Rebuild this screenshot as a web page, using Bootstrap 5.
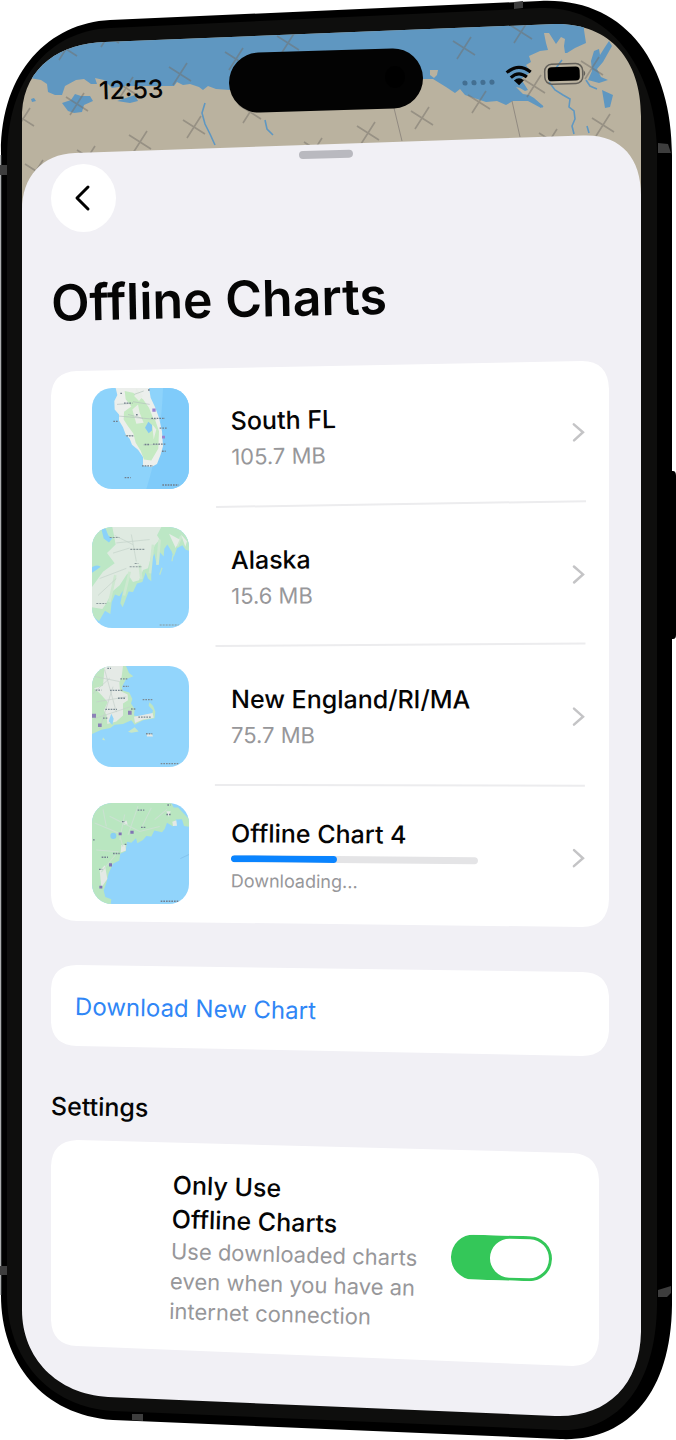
<!DOCTYPE html>
<html lang="en">
<head>
<meta charset="utf-8">
<meta name="viewport" content="width=device-width, initial-scale=1">
<title>Offline Charts</title>
<link href="https://cdn.jsdelivr.net/npm/bootstrap@5.3.0/dist/css/bootstrap.min.css" rel="stylesheet">
<style>
  body { font-family: Inter, "Liberation Sans", sans-serif; background: #fff; color: #050505; }
  .phone { padding: 75px 67px 74px 51px; isolation: isolate; }
  .backdrop { position: absolute; inset: 0; width: 100%; height: 100%; z-index: -1; }
  .tilted { transform: rotate(var(--tilt)); transform-origin: left center; }
  .status { --tilt: -1.8deg; padding-left: 48px; padding-right: 22px; height: 30px; }
  .clock { font-size: 25px; line-height: 30px; font-weight: 500; margin-top: 4px; }
  .grabber { --tilt: -1.5deg; width: 54px; height: 8px; background: #b9b9bf; margin-top: 46px; margin-left: 248px; }
  .back { width: 65px; height: 68px; margin-top: 5px; background: #fff; }
  .page-title { --tilt: -1.2deg; font-size: 50px; line-height: 60px; font-weight: 600; margin-top: 41px; margin-bottom: 28px; }
  .panel { isolation: isolate; }
  .charts { padding: 8px 24px 7px 41px; margin-bottom: 38px; }
  .chart-row { height: 139px; gap: 26px; color: inherit; }
  .chart-row:last-child { height: 134px; }
  .thumb { width: 97px; height: 101px; border-radius: 20px; flex: none; }
  .chart-body { align-self: stretch; border-bottom: 2px solid #ececee; padding-left: 16px; min-width: 0; }
  .chart-row:last-child .chart-body { border: 0; padding-top: 4px; }
  .item-name { font-size: 25px; line-height: 34px; font-weight: 500; }
  .item-note { font-size: 22px; line-height: 30px; color: #97979a; }
  .item-note.minor { font-size: 18px; line-height: 26px; }
  .chart-body .item-note:not(.minor) { margin-top: 4px; }
  .download-bar { width: 247px; height: 7px; background: #e4e4e6; margin: 5px 0 6px; }
  .download-bar .progress-bar { background: #0a84ff; border-radius: 4px; }
  .download-new { --tilt: 1deg; height: 91px; padding: 0 24px 8px; font-size: 24px; color: #2f86f6; margin-bottom: 35px; }
  .section-title { --tilt: 1deg; font-size: 25px; line-height: 30px; font-weight: 500; margin-bottom: 19px; }
  .setting { padding: 28px 47px 40px 120px; margin-right: 10px; }
  .setting-text { --tilt: 1.6deg; width: 260px; }
  .form-check-input.offline-switch { --tilt: 1.6deg; width: 101px; height: 45px; border-radius: 23px; margin: 18px 0 0; flex: none; transition: none;
    background-color: #34c759; border: 0; background-size: 100% 100%; background-position: center;
    background-image: url("data:image/svg+xml,%3Csvg xmlns='http://www.w3.org/2000/svg' viewBox='0 0 101 45'%3E%3Crect x='39' y='3' width='59' height='39' rx='19.5' fill='white'/%3E%3C/svg%3E"); }
</style>
</head>
<body>
<main class="phone position-relative">
  <svg class="backdrop" viewBox="0 0 676 1440" preserveAspectRatio="none" aria-hidden="true">
    <defs>
      <clipPath id="screen"><path d="M22 112C25 66 61 43 105 42L555 24C609 23 641 59 641 116V1332C640 1386 606 1418 555 1416L108 1397C57 1394 22 1358 22 1310Z"/></clipPath>
      <path id="cross" d="M-11-7L11 7M-7 11L7-11"/>
    </defs>
    <path d="M668 471H673Q676 471 676 476V635Q676 639 673 639H668Z" fill="#000"/>
    <path d="M1 155C0 72 49 23 110 20L540 1C625-3 672 63 672 155V1305C671 1395 626 1442 560 1439L113 1420C42 1415 1 1362 1 1295Z" fill="#000"/>
    <path d="M1 155V1295" stroke="#55585b"/>
    <path d="M7 158C7 80 48 31 110 28L540 8C612 5 657 72 657 155V1305C656 1385 618 1432 560 1430L113 1411C48 1407 7 1358 7 1295Z" fill="#0e0e0d"/>
    <path d="M0 165H7V175H0ZM0 1266H7V1275H0ZM132 1414H143V1421L132 1420ZM514 2L523 1V8L514 9ZM658 143L668 144 671 153H658ZM658 1290L671 1286V1293L667 1297H658Z" fill="#3d3d3d"/>
    <g clip-path="url(#screen)">
      <path d="M0 0H676V240H0Z" fill="#bab29f"/>
      <g fill="#5f97c1">
        <path d="M30 0V78L41 80 47 84 48 92 55 95 62 95 65 86 76 80 84 79 91 84 97 84 95 78 104 80 112 88 125 86 155 86 174 86 177 82 183 85 190 84 199 87 203 90 208 86 216 89 230 90 424 79 433 79 446 87 455 93 460 89 465 95 486 102 497 101 506 105 513 101 528 101 541 108 543 106 534 98 529 95 523 94 516 87 520 88 525 91 528 90 521 79 531 72 526 65 531 62 529 56 540 51 548 50 546 43 544 33 549 33 556 44 561 37 565 39 564 46 565 53 567 53 575 48 586 43 584 30V0Z"/>
        <path d="M62 103L71 100 75 94 81 96 90 96 93 101 84 105 82 112 74 113 68 111ZM117 101L135 95 138 101 130 103ZM594 51L599 49 600 55 605 47 609 41 612 46 603 62 597 69 601 77 608 80 599 83 588 80 592 71 591 61ZM602 90L613 95 610 107 605 108ZM31 99L34 98 36 101 32 102Z"/>
        <path d="M430 70L438 70 437 75 434 78 430 75Z" fill="#bab29f"/>
      </g>
      <g fill="none" stroke="#5f97c1" stroke-width="1.6">
        <path d="M205 103L202 113 205 124 210 134 215 145M265 120L267 129 273 135M543 107L535 101M549 82L555 90 563 95 570 99 569 107 574 111 575 119 572 126 574 134M586 80L590 86 597 89M587 126L589 133M556 68L562 60"/>
      </g>
      <path d="M394 108L402 141M512 101L520 137" stroke="#918a81" fill="none"/>
      <g stroke="#746f6a" stroke-opacity=".5" stroke-width="1.6" fill="none">
        <use href="#cross" x="180" y="74"/><use href="#cross" x="236" y="59"/><use href="#cross" x="288" y="43"/><use href="#cross" x="464" y="48"/><use href="#cross" x="521" y="32"/>
        <use href="#cross" x="77" y="104"/><use href="#cross" x="140" y="142"/><use href="#cross" x="194" y="127"/><use href="#cross" x="250" y="112"/><use href="#cross" x="23" y="119"/><use href="#cross" x="36" y="171"/><use href="#cross" x="88" y="157"/>
        <use href="#cross" x="368" y="133"/><use href="#cross" x="422" y="118"/><use href="#cross" x="479" y="102"/><use href="#cross" x="534" y="86"/><use href="#cross" x="603" y="125"/><use href="#cross" x="550" y="140"/><use href="#cross" x="315" y="149"/><use href="#cross" x="592" y="68"/><use href="#cross" x="126" y="88"/><use href="#cross" x="108" y="36"/><use href="#cross" x="66" y="49"/>
      </g>
      <path d="M22 210C22 177 42 154 75 153L583 135.500C621 134 641 158 641 195V1440H22Z" fill="#f1f0f5"/>
    </g>
    <rect x="229" y="50.500" width="194" height="60" rx="30" transform="rotate(-1.800 326 80.500)" fill="#030303"/>
    <ellipse cx="395" cy="77" rx="10" ry="11" fill="#000"/>
  </svg>

  <div class="status tilted d-flex justify-content-between align-items-center">
    <span class="clock">12:53</span>
    <svg width="126" height="26" viewBox="0 0 126 26" role="img" aria-label="Wi-Fi on, battery full">
      <g fill="#436f92"><circle cx="4" cy="19" r="2.600"/><circle cx="13" cy="19" r="2.600"/><circle cx="22" cy="19" r="2.600"/><circle cx="31" cy="19" r="2.600"/></g>
      <g fill="none" stroke="#050505" stroke-width="3.200"><path d="M46 10Q58 0 70 10M50 15Q58 8 66 15"/></g>
      <path d="M53 18Q58 14 63 18L58 23Z" fill="#050505"/>
      <rect x="84" y="3" width="38" height="20" rx="7" fill="none" stroke="#625f59" stroke-width="1.500"/>
      <rect x="87" y="6" width="32" height="14" rx="4" fill="#000"/><path d="M123 10Q126 13 123 16Z" fill="#625f59"/>
    </svg>
  </div>
  <div class="grabber tilted rounded-pill"></div>

  <button type="button" class="back btn rounded-circle border-0 p-0 pe-1 d-flex align-items-center justify-content-center" aria-label="Back">
    <svg width="18" height="28" viewBox="0 0 18 28"><path d="M15 3L4 14 15 25" fill="none" stroke="#000" stroke-width="3" stroke-linecap="round" stroke-linejoin="round"/></svg>
  </button>
  <h1 class="page-title tilted">Offline Charts</h1>

  <section class="panel charts position-relative" aria-label="Charts">
    <svg class="backdrop" viewBox="0 0 558 566" preserveAspectRatio="none" aria-hidden="true"><path d="M0 35Q1 11 26 10L531 0Q557 0 558 28V538Q557 566 531 566L26 560Q1 559 0 534Z" fill="#fff"/></svg>

    <a href="#south-fl" class="chart-row d-flex align-items-center text-decoration-none">
      <svg class="thumb" viewBox="37 41 291 302" preserveAspectRatio="none" aria-hidden="true">
        <path d="M37 41H328V343H37Z" fill="#8dd3fb"/><path d="M250 41Q245 200 200 343H328V41Z" fill="#7fcbfa"/>
        <path d="M108 41L113 62 104 80 105 105 118 120 118 138 130 158 138 180 150 193 157 211 175 226 190 247 190 273 215 277 232 268 243 240 250 215 247 170 238 130 226 98 213 70 208 41Z" fill="#ecefec"/>
        <path d="M135 50L160 55 190 75 208 100 220 130 226 135 238 170 236 222 215 258 193 255 183 229 168 205 161 177 145 155 132 135 133 112 155 96 138 75Z" fill="#c5eac2"/>
        <path d="M170 42L190 65 178 80 164 66ZM158 105L175 90 180 115 192 145 170 148ZM218 150L230 165 222 195Z" fill="#e8eee7"/>
        <path d="M206 142L217 152 217 168 207 176 196 160Z" fill="#84c9f3"/>
        <path d="M164 60L192 50M160 82L210 90M145 120L190 132M112 90L155 87M118 125L230 135M135 183L160 183M190 211L240 210" fill="none" stroke="#b4c2bd" stroke-width="2"/>
        <g stroke="#717e8b" stroke-width="4" stroke-dasharray="5 3"><path d="M122 57H129M205 47H212M133 86H158M101 141H115M169 121H176M215 132H256M240 161H262M140 184H163M195 210H210M220 209H260M247 230H258M187 274H220M135 309H153M248 331H297"/></g>
        <path d="M218 102H228V112H218ZM247 184H256V192H247Z" fill="#9a84d0"/>
      </svg>
      <div class="chart-body tilted d-flex flex-grow-1 align-items-center justify-content-between" style="--tilt:-.9deg">
        <div><div class="item-name">South FL</div><div class="item-note">105.7 MB</div></div>
        <svg width="13" height="20" viewBox="0 0 13 20" aria-hidden="true"><path d="M2 2L11 10 2 18" fill="none" stroke="#c4c4c6" stroke-width="2.500" stroke-linecap="round"/></svg>
      </div>
    </a>

    <a href="#alaska" class="chart-row d-flex align-items-center text-decoration-none">
      <svg class="thumb" viewBox="37 38 291 298" preserveAspectRatio="none" aria-hidden="true">
        <path d="M37 38H328V336H37Z" fill="#92d5fc"/>
        <path d="M37 38H328V108L318 105 308 92 292 101 282 127 276 110 263 90 254 102 252 125 240 112 238 150 229 140 224 116 214 140 215 198 205 190 198 172 188 200 172 205 160 230 147 228 129 275 122 263 130 225 119 242 106 237 96 260 92 295 76 285 58 316 37 300Z" fill="#bce7c5"/>
        <path d="M98 38H245L232 62 240 75 225 92 214 125 205 160 190 165 178 195 160 200 143 175 120 210 98 228 80 263 68 280 37 275V215L70 170 105 145 82 115 108 90Z" fill="#dfeae1"/>
        <path d="M240 75L233 150M220 90L211 175M180 150L185 192M150 170L133 240M107 180L89 260M305 65L292 95" fill="none" stroke="#cde8d0" stroke-width="8"/>
        <path d="M268 58L300 75 288 100ZM304 60L322 80 317 96Z" fill="#e5ece6"/>
        <path d="M65 43H78L86 63 98 71 88 84 72 72ZM37 157Q50 147 63 155Q51 164 37 173Z" fill="#8bd2fa"/>
        <path d="M247 158L240 179M280 120L277 139" stroke="#b9e5cc" stroke-width="4"/>
        <path d="M105 63L160 90M100 115L150 100M110 85L210 75M60 190L140 160M155 60L170 140M55 240L110 190" stroke="#c4d3c9" stroke-width="2" fill="none"/>
        <path d="M90 69H119M152 104H196M150 155H187M165 146H176M240 327H297M50 264H80" stroke="#8a989a" stroke-width="3" stroke-dasharray="6 3"/>
      </svg>
      <div class="chart-body tilted d-flex flex-grow-1 align-items-center justify-content-between" style="--tilt:-.4deg">
        <div><div class="item-name">Alaska</div><div class="item-note">15.6 MB</div></div>
        <svg width="13" height="20" viewBox="0 0 13 20" aria-hidden="true"><path d="M2 2L11 10 2 18" fill="none" stroke="#c4c4c6" stroke-width="2.500" stroke-linecap="round"/></svg>
      </div>
    </a>

    <a href="#new-england" class="chart-row d-flex align-items-center text-decoration-none">
      <svg class="thumb" viewBox="37 34 291 298" preserveAspectRatio="none" aria-hidden="true">
        <path d="M37 34H328V332H37Z" fill="#92d5fc"/>
        <path d="M37 34H139L148 55 161 64 139 73 127 95 129 106 149 112 158 131 154 145 165 161 163 180 179 184 197 178 216 178 220 165 207 151 209 141 220 151 227 168 225 188 190 194 165 207 155 194 130 205 105 207 92 217 65 222 37 235Z" fill="#bfe6c1"/>
        <path d="M75 34H130L126 66 119 83 121 107 144 118 145 135 130 145 130 180 110 198 83 205 81 180 73 165 84 140 61 115 43 100 70 92Z" fill="#e5eae6"/>
        <path d="M95 175L102 190 98 208 87 197Z" fill="#93d4f8"/>
        <path d="M163 184L219 173 222 187 190 192 166 202ZM201 234L217 235 220 242 202 242Z" fill="#e5e9e6"/>
        <path d="M145 228L165 215 177 227 155 231ZM70 244L77 253 68 252Z" fill="#c8e7c7"/>
        <path d="M45 65L120 80M50 140L140 125M75 45L110 170M42 190L150 155M40 115L90 70M100 95L60 220" fill="none" stroke="#c4d0ca" stroke-width="2"/>
        <path d="M83 41H94M122 72H143M130 94H148M91 106H128M48 105H65M115 129H136M77 162H112M154 161H168M70 188H85M189 133H219M176 185H214M199 234H218M243 322H297" stroke="#7b8a93" stroke-width="4" stroke-dasharray="5 3"/>
        <path d="M145 166H156V178H145ZM37 175H49V187H37ZM55 204H66V214H55Z" fill="#8c82b7"/>
      </svg>
      <div class="chart-body tilted d-flex flex-grow-1 align-items-center justify-content-between" style="--tilt:.1deg">
        <div><div class="item-name">New England/RI/MA</div><div class="item-note">75.7 MB</div></div>
        <svg width="13" height="20" viewBox="0 0 13 20" aria-hidden="true"><path d="M2 2L11 10 2 18" fill="none" stroke="#c4c4c6" stroke-width="2.500" stroke-linecap="round"/></svg>
      </div>
    </a>

    <a href="#chart-4" class="chart-row d-flex align-items-center text-decoration-none">
      <svg class="thumb" viewBox="37 41 291 298" preserveAspectRatio="none" aria-hidden="true">
        <path d="M37 41H328V339H37Z" fill="#91d4fb"/>
        <path d="M37 41H275L282 54 295 54 315 75 328 88V111L313 109 307 89 289 90 280 110 262 99 255 118 247 127 224 122 215 140 200 138 190 150 173 160 169 145 155 158 142 155 138 183 122 191 119 211 100 220 87 248 80 276 72 299 77 318 95 325 93 339H37Z" fill="#b9e6c0"/>
        <path d="M125 165L137 164 139 181 123 187ZM60 240L76 225 83 265 65 290ZM130 98L141 93 144 105 132 105ZM260 65L273 65 268 82ZM278 96L290 92 292 108 280 109Z" fill="#e4e9e5"/>
        <ellipse cx="101" cy="138" rx="9" ry="9" fill="#89cff3"/>
        <path d="M45 100L118 130 130 170M90 80L180 125 240 110M175 50L145 135M215 55L185 115M50 180L115 185 65 245M135 75L120 150M70 60L80 110M225 90L262 60" fill="none" stroke="#cbe1d1" stroke-width="3"/>
        <path d="M174 62H194M127 96H136M184 113H200M260 75H273M263 47H272M100 190H120M66 201H85M58 237H68M243 331H297M40 150H46M135 163H142" stroke="#748090" stroke-width="4" stroke-dasharray="5 3"/>
        <path d="M117 128H126V136H117ZM152 123H162V132H152ZM88 219H97V228H88ZM59 285H68V293H59Z" fill="#8174b4"/>
        <path d="M302 205L328 193" stroke="#7ebbe7" stroke-width="2"/>
      </svg>
      <div class="chart-body tilted d-flex flex-grow-1 align-items-center justify-content-between" style="--tilt:.5deg">
        <div><div class="item-name">Offline Chart 4</div>
          <div class="progress download-bar rounded-pill" role="progressbar" aria-label="Download progress" aria-valuenow="43" aria-valuemin="0" aria-valuemax="100"><div class="progress-bar" style="width:43%"></div></div>
          <div class="item-note minor">Downloading...</div></div>
        <svg width="13" height="20" viewBox="0 0 13 20" aria-hidden="true"><path d="M2 2L11 10 2 18" fill="none" stroke="#c4c4c6" stroke-width="2.500" stroke-linecap="round"/></svg>
      </div>
    </a>
  </section>

  <button type="button" class="panel download-new position-relative d-flex align-items-center w-100 border-0 bg-transparent">
    <svg class="backdrop" viewBox="0 0 558 91" preserveAspectRatio="none" aria-hidden="true"><path d="M0 24Q1 0 26 0L531 7Q556 7 558 31V66Q556 91 531 91L26 81Q1 80 0 57Z" fill="#fff"/></svg>
    <span class="tilted">Download New Chart</span>
  </button>

  <h2 class="section-title tilted">Settings</h2>
  <section class="panel setting position-relative d-flex align-items-center justify-content-between" aria-label="Settings">
    <svg class="backdrop" viewBox="0 0 548 226" preserveAspectRatio="none" aria-hidden="true"><path d="M0 26Q1 1 26 0L522 13Q547 15 548 40V198Q547 225 522 226L26 206Q1 205 0 180Z" fill="#fff"/></svg>
    <label class="setting-text tilted" for="offline-only">
      <span class="item-name d-block">Only Use<br>Offline Charts</span>
      <span class="item-note d-block">Use downloaded charts even when you have an internet connection</span>
    </label>
    <input class="form-check-input offline-switch tilted" type="checkbox" role="switch" id="offline-only" checked>
  </section>
</main>
<script src="https://cdn.jsdelivr.net/npm/bootstrap@5.3.0/dist/js/bootstrap.bundle.min.js"></script>
</body>
</html>
